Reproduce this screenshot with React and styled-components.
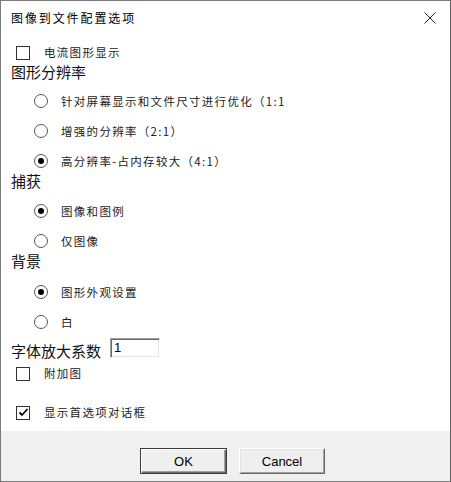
import React from "react";
import styled, { createGlobalStyle } from "styled-components";

const Global = createGlobalStyle`
  html, body { margin: 0; padding: 0; background: #ffffff; }
  body { font-family: "Noto Sans CJK SC", "Noto Sans", sans-serif; }
  * { box-sizing: border-box; }
`;

const Window = styled.div`
  width: 451px;
  height: 482px;
  border: 1px solid #7a7a7a;
  border-right-color: #5f5f5f;
  background: #ffffff;
  display: flex;
  flex-direction: column;
`;

const TitleBar = styled.div`
  height: 34px;
  display: flex;
  align-items: center;
  justify-content: space-between;
  padding-left: 10px;
  padding-right: 12px;
`;

const Title = styled.span`
  font-size: 12px;
  letter-spacing: 1.9px;
  color: #000;
  line-height: 20px;
`;

const Close = styled.span`
  width: 16px;
  height: 16px;
  display: flex;
  align-items: center;
  justify-content: center;
`;

const Body = styled.div`
  flex: 1;
  padding: 8px 0 0 10px;
  display: flex;
  flex-direction: column;
`;

const CheckRow = styled.label`
  height: 19px;
  display: flex;
  align-items: center;
  gap: 14px;
  padding-left: 5px;
  margin-top: ${(p) => p.$top || 0}px;
`;

const Box = styled.span`
  width: 14px;
  height: 14px;
  border: 1px solid #333;
  background: #fff;
  display: flex;
  align-items: center;
  justify-content: center;
`;

const Label = styled.span`
  font-size: 11.5px;
  letter-spacing: 1.3px;
  color: #222;
  line-height: 19px;
  white-space: nowrap;
`;

const Heading = styled.div`
  line-height: 20px;
  font-size: 15px;
  color: #111;
  white-space: nowrap;
  padding-top: ${(p) => p.$pad || 0}px;
  height: ${(p) => 20 + (p.$pad || 0)}px;
`;

const RadioGroup = styled.div`
  display: flex;
  flex-direction: column;
  gap: 10px;
  padding-top: ${(p) => p.$top}px;
`;

const RadioRow = styled.label`
  height: 20px;
  display: flex;
  align-items: center;
  gap: 13px;
  padding-left: 23px;
`;

const Circle = styled.span`
  width: 14px;
  height: 14px;
  border-radius: 50%;
  border: 1px solid #555;
  background: #fff;
  display: flex;
  align-items: center;
  justify-content: center;
  &::after {
    content: "";
    width: 6px;
    height: 6px;
    border-radius: 50%;
    background: #000;
    display: ${(p) => (p.$on ? "block" : "none")};
  }
`;

const FontRow = styled.div`
  display: flex;
  align-items: flex-start;
  gap: 9px;
  margin-top: 6px;
`;

const NumInput = styled.div`
  width: 50px;
  height: 20px;
  border: 1px solid;
  border-color: #a0a0a0 #ffffff #ffffff #a0a0a0;
  box-shadow: inset 1px 1px 0 #696969, inset -1px -1px 0 #e3e3e3;
  font-family: "Liberation Sans", Arial, sans-serif;
  font-size: 13px;
  line-height: 18px;
  padding-left: 3px;
  color: #000;
`;

const Footer = styled.div`
  height: 50px;
  background: #f0f0f0;
  display: flex;
  gap: 12px;
  padding: 17px 0 0 139px;
`;

const Button = styled.div`
  width: ${(p) => p.$w}px;
  height: 26px;
  background: #efefef;
  font-family: "Liberation Sans", Arial, sans-serif;
  font-size: 13px;
  color: #000;
  display: flex;
  align-items: center;
  justify-content: center;
  border: 1px solid;
  border-color: ${(p) => (p.$default ? "#3c3c3c" : "#ffffff #696969 #696969 #ffffff")};
  box-shadow: ${(p) =>
    p.$default
      ? "inset 1px 1px 0 #ffffff, inset -1px -1px 0 #696969, inset -2px -2px 0 #a0a0a0"
      : "inset 1px 1px 0 #e3e3e3, inset -1px -1px 0 #a0a0a0"};
`;

const Check = ({ on }) => (
  <Box>
    {on && (
      <svg width="11" height="11" viewBox="0 0 11 11">
        <path d="M1.5 5.5 L4 8 L9.5 2" fill="none" stroke="#000" strokeWidth="1.8" />
      </svg>
    )}
  </Box>
);

const Radio = ({ on, children }) => (
  <RadioRow>
    <Circle $on={on} />
    <Label>{children}</Label>
  </RadioRow>
);

export default function App() {
  return (
    <>
      <Global />
      <Window>
        <TitleBar>
          <Title>图像到文件配置选项</Title>
          <Close>
            <svg width="12" height="12" viewBox="0 0 12 12">
              <path d="M0.5 0.5 L11.5 11.5 M11.5 0.5 L0.5 11.5" stroke="#222" strokeWidth="1" fill="none" />
            </svg>
          </Close>
        </TitleBar>
        <Body>
          <CheckRow>
            <Check />
            <Label>电流图形显示</Label>
          </CheckRow>
          <Heading>图形分辨率</Heading>
          <RadioGroup $top={9}>
            <Radio>针对屏幕显示和文件尺寸进行优化（1:1</Radio>
            <Radio>增强的分辨率（2:1）</Radio>
            <Radio on>高分辨率-占内存较大（4:1）</Radio>
          </RadioGroup>
          <Heading>捕获</Heading>
          <RadioGroup $top={10}>
            <Radio on>图像和图例</Radio>
            <Radio>仅图像</Radio>
          </RadioGroup>
          <Heading>背景</Heading>
          <RadioGroup $top={11}>
            <Radio on>图形外观设置</Radio>
            <Radio>白</Radio>
          </RadioGroup>
          <FontRow>
            <Heading $pad={3}>字体放大系数</Heading>
            <NumInput>1</NumInput>
          </FontRow>
          <CheckRow $top={3}>
            <Check />
            <Label>附加图</Label>
          </CheckRow>
          <CheckRow $top={20}>
            <Check on />
            <Label>显示首选项对话框</Label>
          </CheckRow>
        </Body>
        <Footer>
          <Button $default $w={87}>OK</Button>
          <Button $w={86}>Cancel</Button>
        </Footer>
      </Window>
    </>
  );
}
